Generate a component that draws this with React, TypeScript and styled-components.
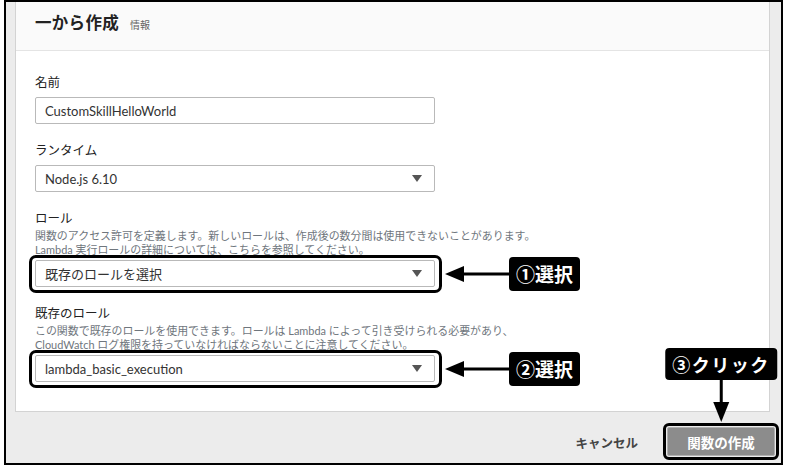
import React from "react";
import styled, { createGlobalStyle } from "styled-components";

const GlobalStyle = createGlobalStyle`
  * { box-sizing: border-box; }
  body {
    margin: 0;
    background: #ffffff;
    font-family: "Lato", "Noto Sans CJK JP", sans-serif;
    color: #222;
  }
`;

interface Callout {
  text: string;
}

const Side: React.FC<Callout> = ({ text }) => (
  <SideCallout>
    <svg width="64" height="18" viewBox="0 0 64 18">
      <polygon points="0,9 19,1 19,17" fill="#000" />
      <rect x="18" y="7.5" width="46" height="3" fill="#000" />
    </svg>
    <Tag>{text}</Tag>
  </SideCallout>
);

const SelectBox: React.FC<{ value: string }> = ({ value }) => (
  <Control>
    <span>{value}</span>
    <Caret />
  </Control>
);

const App: React.FC = () => {
  return (
    <>
      <GlobalStyle />
      <Frame>
        <Card>
          <CardHeader>
            <Title>一から作成</Title>
            <Info>情報</Info>
          </CardHeader>
          <CardBody>
            <Field>
              <Label>名前</Label>
              <Control>CustomSkillHelloWorld</Control>
            </Field>
            <Field>
              <Label>ランタイム</Label>
              <SelectBox value="Node.js 6.10" />
            </Field>
            <Field>
              <Label $tight>ロール</Label>
              <Desc>
                関数のアクセス許可を定義します。新しいロールは、作成後の数分間は使用できないことがあります。
                <br />
                <u>Lambda 実行ロールの詳細については、こちらを参照してください。</u>
              </Desc>
              <Marked>
                <SelectBox value="既存のロールを選択" />
                <Side text="①選択" />
              </Marked>
            </Field>
            <Field>
              <Label $tight>既存のロール</Label>
              <Desc>
                この関数で既存のロールを使用できます。ロールは Lambda によって引き受けられる必要があり、
                <br />
                <u>CloudWatch ログ権限を持っていなければならないことに注意してください。</u>
              </Desc>
              <Marked>
                <SelectBox value="lambda_basic_execution" />
                <Side text="②選択" />
              </Marked>
            </Field>
          </CardBody>
        </Card>
        <Footer>
          <Cancel>キャンセル</Cancel>
          <ButtonMark>
            <CreateButton>関数の作成</CreateButton>
            <DownCallout>
              <Tag $wide>③クリック</Tag>
              <svg width="18" height="42" viewBox="0 0 18 42">
                <rect x="7.5" y="0" width="3" height="24" fill="#000" />
                <polygon points="1,22 17,22 9,42" fill="#000" />
              </svg>
            </DownCallout>
          </ButtonMark>
        </Footer>
      </Frame>
    </>
  );
};

export default App;

const Frame = styled.div`
  margin-left: 4px;
  width: 779px;
  height: 465px;
  border: 2px solid #000;
  background: #ececec;
  padding: 0 11px 0 9px;
  display: flex;
  flex-direction: column;
`;

const Card = styled.div`
  background: #fff;
  border: 1px solid #d3d3d3;
  border-top: none;
`;

const CardHeader = styled.div`
  height: 49px;
  background: #fafafa;
  border-bottom: 1px solid #e4e4e4;
  display: flex;
  align-items: baseline;
  padding: 9px 0 0 19px;
`;

const Title = styled.h2`
  margin: 0;
  font-size: 16.5px;
  line-height: 24px;
  font-weight: 700;
  color: #222;
  letter-spacing: 0.3px;
`;

const Info = styled.span`
  margin-left: 11px;
  font-size: 10px;
  color: #666;
`;

const CardBody = styled.div`
  padding: 24px 0 29px 19px;
  display: flex;
  flex-direction: column;
  gap: 19px;
`;

const Field = styled.div`
  display: flex;
  flex-direction: column;
  width: 400px;
`;

const Label = styled.div<{ $tight?: boolean }>`
  font-size: 12.5px;
  line-height: 16px;
  color: #222;
  margin-bottom: ${(p) => (p.$tight ? "2px" : "6px")};
`;

const Desc = styled.div`
  width: 600px;
  font-size: 10.95px;
  line-height: 14px;
  color: #6f767d;
  white-space: nowrap;
  margin-bottom: 3px;
  u {
    text-decoration-color: #8a8a8a;
  }
`;

const Control = styled.div`
  height: 27px;
  border: 1px solid #b9b9b9;
  border-radius: 2px;
  background: #fff;
  padding: 0 12px 0 9px;
  display: flex;
  align-items: center;
  justify-content: space-between;
  font-size: 13px;
  color: #333;
`;

const Caret = styled.span`
  width: 0;
  height: 0;
  border-left: 5px solid transparent;
  border-right: 5px solid transparent;
  border-top: 7px solid #555;
`;

const Marked = styled.div`
  position: relative;
  &::after {
    content: "";
    position: absolute;
    top: -5px;
    left: -6px;
    right: -7px;
    bottom: -6px;
    border: 3.5px solid #000;
    border-radius: 7px;
    pointer-events: none;
  }
`;

const SideCallout = styled.div`
  position: absolute;
  left: calc(100% + 10px);
  top: 50%;
  transform: translateY(-50%);
  display: flex;
  align-items: center;
`;

const Tag = styled.div<{ $wide?: boolean }>`
  background: #000;
  color: #fff;
  border-radius: 4px;
  font-family: "Noto Sans CJK JP", sans-serif;
  font-weight: 700;
  font-size: ${(p) => (p.$wide ? "18px" : "19px")};
  letter-spacing: ${(p) => (p.$wide ? "1.5px" : "0")};
  line-height: ${(p) => (p.$wide ? "32px" : "34px")};
  padding: 0 7px;
  white-space: nowrap;
`;

const Footer = styled.div`
  display: flex;
  justify-content: flex-end;
  align-items: center;
  padding: 15px 0 0;
  margin-right: -5px;
  gap: 29px;
`;

const Cancel = styled.span`
  font-family: "Noto Sans CJK JP", sans-serif;
  font-size: 12.5px;
  font-weight: 700;
  color: #444;
  padding-top: 2px;
`;

const ButtonMark = styled.div`
  position: relative;
  &::after {
    content: "";
    position: absolute;
    inset: -4px;
    border: 3.5px solid #000;
    border-radius: 6px;
    pointer-events: none;
  }
`;

const CreateButton = styled.button`
  width: 108px;
  height: 29px;
  background: #8c8c8c;
  border: 1px solid #b0b0b0;
  border-radius: 2px;
  color: #fff;
  font-family: "Noto Sans CJK JP", sans-serif;
  font-weight: 700;
  font-size: 13.5px;
  display: block;
`;

const DownCallout = styled.div`
  position: absolute;
  bottom: calc(100% + 5px);
  left: 50%;
  transform: translateX(-50%);
  display: flex;
  flex-direction: column;
  align-items: center;
  z-index: 2;
`;
